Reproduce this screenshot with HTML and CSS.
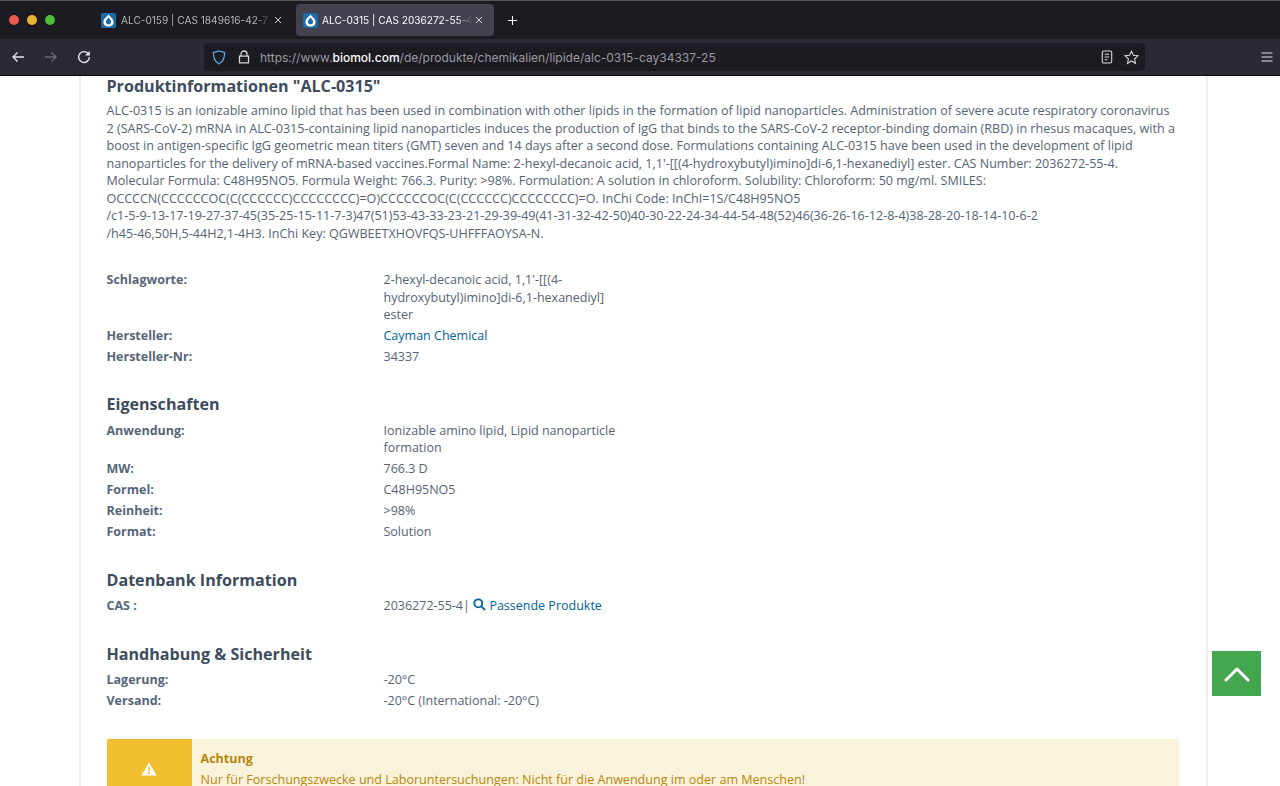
FILE: index.html
```html
<!DOCTYPE html>
<html>

<head>
    <meta charset="utf-8" />
    <title>ALC-0315 | CAS 2036272-55-4</title>
    <link rel="stylesheet" href="styles.css">
</head>

<body>
    <div class="tabbar">
        <div class="lights">
            <span class="light red"></span>
            <span class="light yellow"></span>
            <span class="light green"></span>
        </div>
        <div class="tab">
            <svg class="favicon" viewBox="0 0 15 15">
                <rect width="15" height="15" rx="1.5" fill="#1c6aa8" />
                <path d="M7.5 1.2C7 3 2.4 5.2 2.4 8.9C2.4 11.8 4.7 13.6 7.5 13.6C10.3 13.6 12.6 11.8 12.6 8.9C12.6 5.2 8 3 7.5 1.2Z" fill="#fff" />
                <path d="M7.5 4.6C6.4 6 4.9 7.2 4.9 8.9C4.9 10.4 6.1 11.3 7.5 11.3C8.9 11.3 10.1 10.4 10.1 8.9C10.1 7.2 8.6 6 7.5 4.6Z" fill="#1c6aa8" />
            </svg>
            <span class="tab-title">ALC-0159 | CAS 1849616-42-7</span>
            <svg class="tab-close" viewBox="0 0 8 8"><path d="M1 1L7 7M7 1L1 7" /></svg>
        </div>
        <div class="tab active">
            <svg class="favicon" viewBox="0 0 15 15">
                <rect width="15" height="15" rx="1.5" fill="#1c6aa8" />
                <path d="M7.5 1.2C7 3 2.4 5.2 2.4 8.9C2.4 11.8 4.7 13.6 7.5 13.6C10.3 13.6 12.6 11.8 12.6 8.9C12.6 5.2 8 3 7.5 1.2Z" fill="#fff" />
                <path d="M7.5 4.6C6.4 6 4.9 7.2 4.9 8.9C4.9 10.4 6.1 11.3 7.5 11.3C8.9 11.3 10.1 10.4 10.1 8.9C10.1 7.2 8.6 6 7.5 4.6Z" fill="#1c6aa8" />
            </svg>
            <span class="tab-title">ALC-0315 | CAS 2036272-55-4</span>
            <svg class="tab-close" viewBox="0 0 8 8"><path d="M1 1L7 7M7 1L1 7" /></svg>
        </div>
        <svg class="new-tab" viewBox="0 0 12 12"><path d="M6 1V11M1 6H11" /></svg>
    </div>

    <div class="toolbar">
        <svg class="nav-icon" viewBox="0 0 14 14"><path d="M13 7H2M6.5 2.5L2 7L6.5 11.5" /></svg>
        <svg class="nav-icon dim" viewBox="0 0 14 14"><path d="M1 7H12M7.5 2.5L12 7L7.5 11.5" /></svg>
        <svg class="nav-icon" viewBox="0 0 14 14"><path d="M11.6 4.2A5.4 5.4 0 1 0 12.4 7M12.2 1.4V4.8H8.8" /></svg>
        <div class="urlbar">
            <svg class="shield" viewBox="0 0 14 15"><path d="M7 1L12.6 2.6C12.8 8 11 11.8 7 14C3 11.8 1.2 8 1.4 2.6Z" /></svg>
            <svg class="lock" viewBox="0 0 12 14"><path d="M3 6V4A3 3 0 0 1 9 4V6M1.5 6.2H10.5V12.8H1.5Z" /></svg>
            <span class="url">https://www.<b>biomol.com</b>/de/produkte/chemikalien/lipide/alc-0315-cay34337-25</span>
            <svg class="url-icon" viewBox="0 0 12 14"><path d="M2.5 1H9.5A1.2 1.2 0 0 1 10.7 2.2V11.8A1.2 1.2 0 0 1 9.5 13H2.5A1.2 1.2 0 0 1 1.3 11.8V2.2A1.2 1.2 0 0 1 2.5 1ZM3.8 4.2H8.2M3.8 7H8.2M3.8 9.8H6.4" /></svg>
            <svg class="url-icon star" viewBox="0 0 15 15"><path d="M7.5 1.2L9.4 5.3L13.9 5.8L10.6 8.8L11.5 13.3L7.5 11L3.5 13.3L4.4 8.8L1.1 5.8L5.6 5.3Z" /></svg>
        </div>
        <svg class="menu-icon" viewBox="0 0 12 10"><path d="M0.5 1H11.5M0.5 5H11.5M0.5 9H11.5" /></svg>
    </div>

    <div class="page">
        <div class="container">
            <h2 class="first">Produktinformationen "ALC-0315"</h2>
            <p class="description">ALC-0315 is an ionizable amino lipid that has been used in combination with other lipids in the formation of lipid nanoparticles. Administration of severe acute respiratory coronavirus<br>2 (SARS-CoV-2) mRNA in ALC-0315-containing lipid nanoparticles induces the production of IgG that binds to the SARS-CoV-2 receptor-binding domain (RBD) in rhesus macaques, with a<br>boost in antigen-specific IgG geometric mean titers (GMT) seven and 14 days after a second dose. Formulations containing ALC-0315 have been used in the development of lipid<br>nanoparticles for the delivery of mRNA-based vaccines.Formal Name: 2-hexyl-decanoic acid, 1,1'-[[(4-hydroxybutyl)imino]di-6,1-hexanediyl] ester. CAS Number: 2036272-55-4.<br>Molecular Formula: C48H95NO5. Formula Weight: 766.3. Purity: &gt;98%. Formulation: A solution in chloroform. Solubility: Chloroform: 50 mg/ml. SMILES:<br>OCCCCN(CCCCCCOC(C(CCCCCC)CCCCCCCC)=O)CCCCCCOC(C(CCCCCC)CCCCCCCC)=O. InChi Code: InChI=1S/C48H95NO5<br>/c1-5-9-13-17-19-27-37-45(35-25-15-11-7-3)47(51)53-43-33-23-21-29-39-49(41-31-32-42-50)40-30-22-24-34-44-54-48(52)46(36-26-16-12-8-4)38-28-20-18-14-10-6-2<br>/h45-46,50H,5-44H2,1-4H3. InChi Key: QGWBEETXHOVFQS-UHFFFAOYSA-N.</p>

            <div class="rows tags">
                <div class="row"><span class="key">Schlagworte:</span><span class="val">2-hexyl-decanoic acid, 1,1'-[[(4-hydroxybutyl)imino]di-6,1-hexanediyl] ester</span></div>
                <div class="row"><span class="key">Hersteller:</span><span class="val"><a href="#">Cayman Chemical</a></span></div>
                <div class="row"><span class="key">Hersteller-Nr:</span><span class="val">34337</span></div>
            </div>

            <h2>Eigenschaften</h2>
            <div class="rows props">
                <div class="row"><span class="key">Anwendung:</span><span class="val">Ionizable amino lipid, Lipid nanoparticle formation</span></div>
                <div class="row"><span class="key">MW:</span><span class="val">766.3 D</span></div>
                <div class="row"><span class="key">Formel:</span><span class="val">C48H95NO5</span></div>
                <div class="row"><span class="key">Reinheit:</span><span class="val">&gt;98%</span></div>
                <div class="row"><span class="key">Format:</span><span class="val">Solution</span></div>
            </div>

            <h2>Datenbank Information</h2>
            <div class="rows db">
                <div class="row"><span class="key">CAS :</span><span class="val nowrap">2036272-55-4| <a href="#"><svg class="search" viewBox="0 0 13 13"><circle cx="5.3" cy="5.3" r="4" /><path d="M8.3 8.3L12 12" /></svg> Passende Produkte</a></span></div>
            </div>

            <h2>Handhabung &amp; Sicherheit</h2>
            <div class="rows">
                <div class="row"><span class="key">Lagerung:</span><span class="val">-20°C</span></div>
                <div class="row"><span class="key">Versand:</span><span class="val">-20°C (International: -20°C)</span></div>
            </div>

            <div class="alert">
                <div class="alert-icon">
                    <svg viewBox="0 0 16 14"><path fill-rule="evenodd" d="M8 0.5L15.6 13.5H0.4ZM7.1 5H8.9L8.6 9.2H7.4ZM7.1 10.2H8.9V11.9H7.1Z" /></svg>
                </div>
                <div class="alert-body">
                    <strong>Achtung</strong>
                    <p>Nur für Forschungszwecke und Laboruntersuchungen: Nicht für die Anwendung im oder am Menschen!</p>
                </div>
            </div>
        </div>
    </div>

    <a class="to-top" href="#"><svg viewBox="0 0 26 16"><path d="M2 14L13 3L24 14" /></svg></a>
</body>

</html>
```

FILE: styles.css
```css
html,
body {
    margin: 0;
    height: 786px;
    overflow: hidden;
    background-color: #fff;
}

body {
    font-family: "Open Sans", sans-serif;
}

/* browser chrome */
.tabbar {
    height: 39px;
    box-sizing: border-box;
    border-top: 1px solid #55555a;
    background-color: #1c1b22;
    display: flex;
    align-items: center;
    font-family: Inter, "Liberation Sans", sans-serif;
}

.lights {
    display: flex;
    gap: 8px;
    margin-left: 9px;
    width: 85px;
}

.light {
    width: 10px;
    height: 10px;
    border-radius: 50%;
}

.red {
    background-color: #ee5a52;
}

.yellow {
    background-color: #e5b32f;
}

.green {
    background-color: #4fbb3a;
}

.tab {
    width: 198px;
    height: 32px;
    box-sizing: border-box;
    padding: 0 7px;
    margin-right: 4px;
    border-radius: 4px;
    display: flex;
    align-items: center;
    color: #b4b4b8;
    font-size: 10.1px;
}

.tab.active {
    margin-right: 0;
    background-color: #42414d;
    color: #fbfbfe;
}

.favicon {
    width: 15px;
    height: 15px;
    flex: none;
    margin-right: 5px;
}

.tab.active .favicon {
    margin-right: 4px;
}

.tab-title {
    width: 150px;
    overflow: hidden;
    white-space: nowrap;
    -webkit-mask-image: linear-gradient(to right, #000 90%, transparent);
    mask-image: linear-gradient(to right, #000 90%, transparent);
}

.tab-close {
    width: 8px;
    height: 8px;
    margin-left: 3px;
    fill: none;
    stroke: #d0d0d4;
    stroke-width: 1;
}

.new-tab {
    width: 11px;
    height: 11px;
    margin-left: 13px;
    fill: none;
    stroke: #fbfbfe;
    stroke-width: 1.2;
}

.toolbar {
    height: 37px;
    box-sizing: border-box;
    background-color: #2b2a33;
    border-bottom: 1px solid #0c0c0d;
    display: flex;
    align-items: center;
    padding-left: 11px;
    font-family: Inter, "Liberation Sans", sans-serif;
}

.nav-icon {
    width: 14px;
    height: 14px;
    margin-right: 19px;
    fill: none;
    stroke: #e4e4e8;
    stroke-width: 1.4;
}

.nav-icon.dim {
    stroke: #6d6c75;
}

.urlbar {
    width: 941px;
    height: 28px;
    margin-left: 94px;
    box-sizing: border-box;
    border-radius: 4px;
    background-color: #1c1b22;
    display: flex;
    align-items: center;
    padding-left: 8px;
}

.shield {
    width: 14px;
    height: 15px;
    fill: none;
    stroke: #5aa9e6;
    stroke-width: 1.3;
}

.lock {
    width: 12px;
    height: 14px;
    margin-left: 12px;
    fill: none;
    stroke: #d8d8dc;
    stroke-width: 1.3;
}

.url {
    margin-left: 10px;
    width: 841px;
    font-size: 12px;
    color: #9a99a0;
    white-space: nowrap;
}

.url b {
    font-weight: 500;
    color: #fbfbfe;
}

.url-icon {
    width: 12px;
    height: 14px;
    fill: none;
    stroke: #d8d8dc;
    stroke-width: 1.1;
}

.star {
    width: 15px;
    height: 15px;
    margin-left: 11px;
}

.menu-icon {
    width: 12px;
    height: 10px;
    margin-left: 116px;
    fill: none;
    stroke: #e4e4e8;
    stroke-width: 1.2;
}

/* page */
.page {
    height: 710px;
    overflow: hidden;
}

.container {
    width: 1072px;
    margin-left: 79px;
    padding: 0 27.5px 0 25.5px;
    border-left: 2px solid #eeeeee;
    border-right: 2px solid #eeeeee;
    color: #556373;
    font-size: 12.5px;
    line-height: 21px;
}

h2 {
    margin: 0;
    font-size: 16.1px;
    line-height: 22px;
    font-weight: 700;
    color: #3d4c5c;
}

h2.first {
    margin-top: -1px;
}

.description {
    margin: 5px 0 0 0;
    font-size: 12.55px;
    line-height: 17.5px;
    white-space: nowrap;
}

.rows {
    margin: 4px 0 26px 0;
}

.rows.tags {
    margin-top: 27px;
}

.rows.props {
    margin-top: 4.5px;
    margin-bottom: 26.5px;
}

.rows.db {
    margin-bottom: 27px;
}

.row {
    display: flex;
}

.key {
    width: 277px;
    flex: none;
    font-weight: 700;
    color: #566679;
}

.val {
    width: 240px;
    line-height: 17.5px;
    padding: 2px 0 1.5px 0;
}

.nowrap {
    white-space: nowrap;
}

a {
    color: #00649b;
    text-decoration: none;
}

.search {
    width: 13px;
    height: 13px;
    vertical-align: -1px;
    fill: none;
    stroke: #00649b;
    stroke-width: 1.8;
}

.alert {
    display: flex;
    margin-top: 28px;
    height: 80px;
    border-radius: 2px;
    overflow: hidden;
    background-color: #faf3db;
    color: #b8860b;
}

.alert-icon {
    width: 85px;
    flex: none;
    background-color: #f2bf30;
    display: flex;
    justify-content: center;
    padding-top: 23px;
    box-sizing: border-box;
}

.alert-icon svg {
    width: 16px;
    height: 14px;
    fill: #fff;
}

.alert-body {
    padding: 9px 9px;
    font-size: 12.55px;
}

.alert-body strong {
    font-weight: 700;
}

.alert-body p {
    margin: 0;
}

.to-top {
    position: fixed;
    left: 1212px;
    top: 651px;
    width: 49px;
    height: 45px;
    background-color: #44a64f;
    display: flex;
    align-items: center;
    justify-content: center;
}

.to-top svg {
    width: 26px;
    height: 16px;
    fill: none;
    stroke: #fff;
    stroke-width: 3;
    stroke-linecap: round;
    stroke-linejoin: round;
}
```
